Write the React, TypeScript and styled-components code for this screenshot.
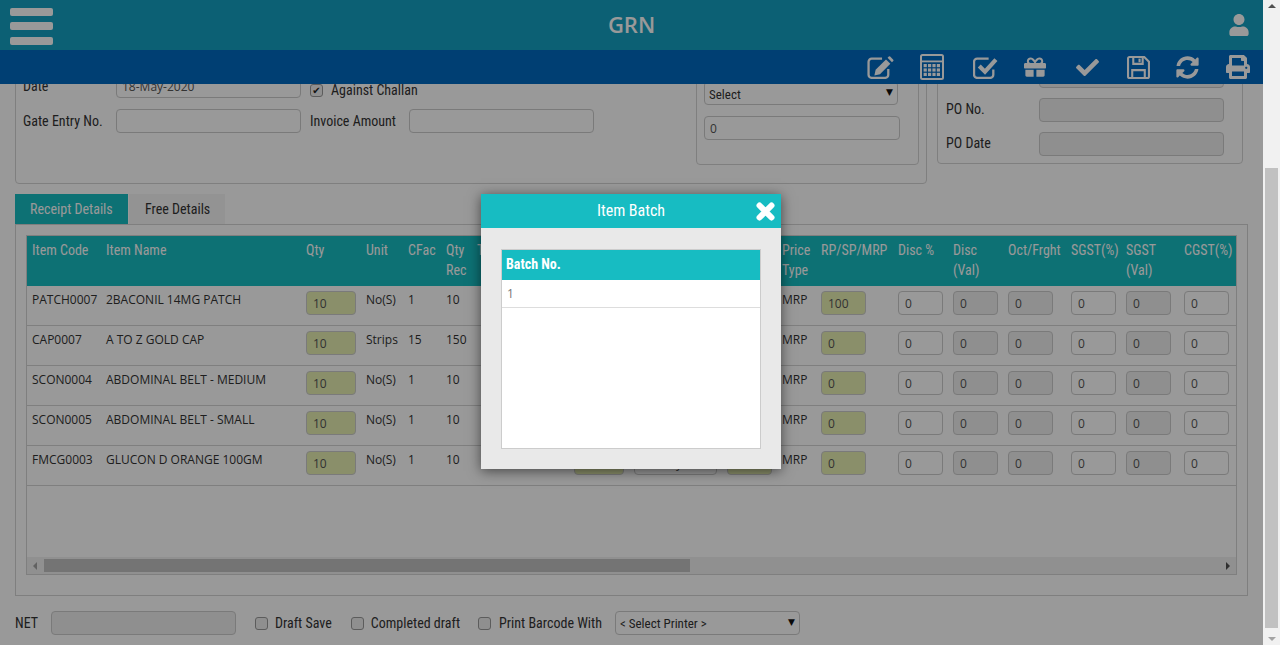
import React from 'react';
import styled, { createGlobalStyle } from 'styled-components';
import { FaCheck, FaGift, FaPrint, FaSyncAlt, FaUser } from 'react-icons/fa';

const narrow = `'Liberation Sans Narrow', 'Roboto Condensed', Roboto, sans-serif`;
const body = `'Open Sans', sans-serif`;

const GlobalStyle = createGlobalStyle`
	html, body { margin: 0; padding: 0; height: 100%; overflow: hidden; background: #fff; }
	* { box-sizing: border-box; }
`;

const Shell = styled.div`
	display: flex;
	width: 1280px;
	height: 645px;
	position: relative;
`;

const Main = styled.div`
	width: 1263px;
	height: 645px;
	display: flex;
	flex-direction: column;
	font-family: ${narrow};
	color: #333;
`;

const Header = styled.header`
	height: 50px;
	flex: none;
	background: #14a0c1;
	display: flex;
	align-items: center;
	padding: 0 13px 0 10px;
`;

const Burger = styled.div`
	width: 43px;
	margin-top: 2px;
	flex: none;
	display: flex;
	flex-direction: column;
	gap: 6.5px;
`;

const BurgerBar = styled.span`
	height: 8px;
	border-radius: 2px;
	background: #fff;
`;

const Title = styled.h1`
	margin: 0 0 2px;
	flex: 1;
	text-align: center;
	font: 600 22px ${body};
	color: #fff;
`;

const UserSlot = styled.div`
	width: 40px;
	flex: none;
	display: flex;
	justify-content: flex-end;
	color: #fff;
	svg {
		display: block;
		width: 22px;
		height: 22px;
	}
`;

const Toolbar = styled.div`
	height: 34px;
	flex: none;
	background: #0069c0;
	display: flex;
	justify-content: flex-end;
	align-items: center;
`;

const ToolButton = styled.span<{ $width: number; $size?: number }>`
	width: ${(p) => p.$width}px;
	display: flex;
	justify-content: center;
	color: #fff;
	svg {
		display: block;
		width: ${(p) => p.$size ?? 24}px;
		height: ${(p) => p.$size ?? 24}px;
	}
`;

const Viewport = styled.div`
	flex: 1;
	overflow: hidden;
	display: flex;
	flex-direction: column;
`;

// the page is scrolled: the top of the form sits under the toolbar
const ScrolledPage = styled.div`
	margin-top: -40px;
	padding: 0 15px;
	display: flex;
	flex-direction: column;
`;

const TopRow = styled.div`
	display: flex;
	align-items: flex-start;
	gap: 10px;
`;

const FormPanel = styled.div`
	width: 912px;
	height: 140px;
	border: 1px solid #d4d4d4;
	border-radius: 4px;
	padding: 0 7px;
	display: flex;
	justify-content: space-between;
`;

const FieldColumn = styled.div`
	padding-top: 29px;
	display: flex;
	flex-direction: column;
	gap: 11px;
`;

const FieldRow = styled.div`
	display: flex;
	align-items: center;
`;

const Label = styled.label<{ $width?: number; $lift?: number; $gap?: number }>`
	width: ${(p) => (p.$width ? `${p.$width}px` : 'auto')};
	margin-left: ${(p) => p.$gap ?? 0}px;
	padding-bottom: ${(p) => p.$lift ?? 0}px;
	flex: none;
	font-size: 14px;
	color: #333;
`;

const Input = styled.input<{ $tone?: 'plain' | 'locked' | 'accent'; $width?: number }>`
	display: block;
	width: ${(p) => p.$width ?? 185}px;
	height: 24px;
	border: 1px solid #ccc;
	border-radius: 4px;
	padding: 0 5px;
	font: 12px ${body};
	color: #555;
	outline: none;
	background: ${(p) => (p.$tone === 'locked' ? '#eee' : p.$tone === 'accent' ? '#e6eeb1' : '#fff')};
`;

const Check = styled.input.attrs({ type: 'checkbox' })`
	appearance: none;
	width: 13px;
	height: 13px;
	margin: 0;
	flex: none;
	display: flex;
	align-items: center;
	justify-content: center;
	background: #eee;
	border: 1px solid #999;
	border-radius: 3px;
	&:checked::after {
		content: '✔';
		font: 10px/11px 'DejaVu Sans', sans-serif;
		color: #222;
	}
`;

const ChallanField = styled.label`
	margin-left: 9px;
	display: flex;
	align-items: center;
	gap: 8px;
	font-size: 14px;
	padding-top: 8px;
`;

const SubPanel = styled.div`
	width: 223px;
	height: 105px;
	margin-top: 15px;
	border: 1px solid #d4d4d4;
	border-radius: 4px;
	padding: 20px 0 0 7px;
	display: flex;
	flex-direction: column;
	gap: 11px;
`;

const SelectBox = styled.div<{ $width: number; $gap?: number }>`
	position: relative;
	width: ${(p) => p.$width}px;
	margin-left: ${(p) => p.$gap ?? 0}px;
	flex: none;
	&::after {
		content: '▼';
		position: absolute;
		right: 5px;
		top: 5px;
		font: 9px/12px 'DejaVu Sans', sans-serif;
		color: #111;
	}
`;

const Select = styled.select<{ $drop?: number }>`
	appearance: none;
	display: block;
	width: 100%;
	height: 24px;
	border: 1px solid #ccc;
	border-radius: 4px;
	background: #fff;
	font: 13px ${narrow};
	color: #333;
	padding: ${(p) => p.$drop ?? 0}px 0 0 4px;
`;

const PoPanel = styled.div`
	width: 306px;
	height: 120px;
	border: 1px solid #d4d4d4;
	border-radius: 4px;
	padding: 19px 0 0 8px;
	display: flex;
	flex-direction: column;
	gap: 10px;
`;

const Tabs = styled.div`
	margin-top: 10px;
	height: 30px;
	display: flex;
	gap: 1px;
`;

const Tab = styled.div<{ $active?: boolean }>`
	padding-left: ${(p) => (p.$active ? 15 : 16)}px;
	width: ${(p) => (p.$active ? 113 : 96)}px;
	line-height: 30px;
	font-size: 14px;
	white-space: nowrap;
	color: ${(p) => (p.$active ? '#fff' : '#333')};
	background: ${(p) => (p.$active ? '#17bcc2' : '#f5f5f5')};
`;

const TabPanel = styled.div`
	width: 1233px;
	height: 372px;
	border: 1px solid #d4d4d4;
	padding: 10px 10px 20px;
`;

const GridFrame = styled.div`
	width: 1211px;
	height: 340px;
	border: 1px solid #d4d4d4;
	display: flex;
	flex-direction: column;
`;

const TableArea = styled.div`
	flex: 1;
	overflow: hidden;
`;

const Table = styled.table`
	table-layout: fixed;
	width: 1210px;
	border-collapse: separate;
	border-spacing: 0;
`;

const Th = styled.th`
	height: 50px;
	padding: 4px 0 6px 5px;
	vertical-align: top;
	text-align: left;
	font-size: 14px;
	font-weight: 400;
	line-height: 20px;
	white-space: pre-line;
	color: #fff;
	background: #17bcc2;
`;

const Td = styled.td`
	height: 40px;
	padding: 4px 0 0 5px;
	vertical-align: top;
	border-bottom: 1px solid #d4d4d4;
	font: 12px/20px ${body};
	color: #333;
	white-space: nowrap;
	overflow: hidden;
`;

const CellInput = styled(Input)`
	margin-top: 1px;
	padding: 0 6px;
`;

const HScroll = styled.div`
	height: 17px;
	flex: none;
	background: #f1f1f1;
	display: flex;
	align-items: center;
	padding: 0 6px;
`;

const HThumb = styled.div`
	width: 646px;
	height: 13px;
	margin-left: 7px;
	margin-right: auto;
	background: #c1c1c1;
`;

const Arrow = styled.span<{ $dir: 'left' | 'right' | 'up' | 'down'; $color: string }>`
	width: 0;
	height: 0;
	flex: none;
	border: 4px solid transparent;
	${(p) => (p.$dir === 'left' ? `border-left: 0; border-right-color: ${p.$color};` : '')}
	${(p) => (p.$dir === 'right' ? `border-right: 0; border-left-color: ${p.$color};` : '')}
	${(p) => (p.$dir === 'up' ? `border-top: 0; border-bottom-color: ${p.$color};` : '')}
	${(p) => (p.$dir === 'down' ? `border-bottom: 0; border-top-color: ${p.$color};` : '')}
`;

const Footer = styled.div`
	margin-top: 15px;
	height: 24px;
	display: flex;
	align-items: center;
`;

const FooterCheck = styled.label<{ $left: number; $gap: number }>`
	margin-left: ${(p) => p.$left}px;
	display: flex;
	align-items: center;
	gap: ${(p) => p.$gap}px;
	font-size: 14px;
	white-space: nowrap;
`;

const PageScroll = styled.div`
	width: 17px;
	height: 645px;
	flex: none;
	background: #f1f1f1;
	display: flex;
	flex-direction: column;
	align-items: center;
	padding: 4px 0;
`;

const PageThumb = styled.div`
	width: 13px;
	height: 460px;
	margin-top: 160px;
	margin-bottom: auto;
	background: #c1c1c1;
`;

const Dim = styled.div`
	position: absolute;
	left: 0;
	top: 0;
	width: 1263px;
	height: 645px;
	background: rgba(0, 0, 0, 0.4);
`;

const Modal = styled.div`
	position: absolute;
	left: 481px;
	top: 194px;
	width: 300px;
	height: 275px;
	background: #e9e9e9;
	box-shadow: 0 2px 12px rgba(0, 0, 0, 0.55);
	font-family: ${narrow};
`;

const ModalHead = styled.div`
	height: 34px;
	padding-bottom: 2px;
	background: #17bcc2;
	color: #fff;
	font-size: 16px;
	display: flex;
	align-items: center;
	justify-content: center;
	position: relative;
`;

const CloseButton = styled.svg`
	position: absolute;
	right: 5px;
	top: 7px;
	width: 21px;
	height: 21px;
	stroke: #fff;
	stroke-width: 6;
	stroke-linecap: round;
`;

const BatchList = styled.div`
	margin: 21px 20px 0;
	height: 200px;
	background: #fff;
	border: 1px solid #ccc;
`;

const BatchHead = styled.div`
	height: 30px;
	padding-left: 4px;
	line-height: 28px;
	background: #17bcc2;
	color: #fff;
	font-size: 14px;
	font-weight: 700;
`;

const BatchRow = styled.div`
	height: 28px;
	padding-left: 5px;
	border-bottom: 1px solid #ddd;
	font: 12px/27px ${body};
	color: #777;
`;

const line = { fill: 'none', stroke: 'currentColor', strokeWidth: 2.2 };

const EditIcon = () => (
	<svg viewBox="0 0 26 22" style={{ width: 27, height: 23 }} fill="currentColor">
		<path {...line} d="M14.5 2.5H4.5a3 3 0 0 0-3 3v12.5a3 3 0 0 0 3 3h13a3 3 0 0 0 3-3v-5.5" />
		<path d="M18.3 3.2l4.2 4.2-10 10-5.4 1.2 1.2-5.4z" />
		<path d="M19.8 1.7l1.2-1.2a1 1 0 0 1 1.3 0l3 3a1 1 0 0 1 0 1.3L24 6z" />
	</svg>
);

const CalculatorIcon = () => (
	<svg viewBox="0 0 24 26" style={{ width: 24, height: 26 }} fill="currentColor">
		<rect x="1" y="1" width="22" height="24" rx="1.5" fill="none" stroke="currentColor" strokeWidth="2" />
		<rect x="1" y="6.5" width="22" height="1.8" />
		{[10, 14.4, 18.8].map((y) =>
			[3.6, 8, 12.4, 16.8].map((x) => <rect key={`${x}-${y}`} x={x} y={y} width="3.2" height="3.2" />),
		)}
	</svg>
);

const CheckSquareIcon = () => (
	<svg viewBox="0 0 24 22" style={{ width: 25, height: 23 }} fill="none" stroke="currentColor">
		<path strokeWidth="2.2" d="M15 2.5H4a3 3 0 0 0-3 3v12.5a3 3 0 0 0 3 3h12.5a3 3 0 0 0 3-3v-5" />
		<path strokeWidth="4" d="M6 9.5l5.5 5.5L22 3.5" />
	</svg>
);

const SaveIcon = () => (
	<svg viewBox="0 0 22 22" style={{ width: 23, height: 23 }} fill="none" stroke="currentColor">
		<path strokeWidth="2" d="M2.5 1H16.5L21 5.5V19.5A1.5 1.5 0 0 1 19.5 21H2.5A1.5 1.5 0 0 1 1 19.5V2.5A1.5 1.5 0 0 1 2.5 1z" />
		<path strokeWidth="2" d="M6 1v6.5h9V1M5 21v-7.5h12V21" />
		<path strokeWidth="2" d="M12 2.5v3.5" />
	</svg>
);

const widths = [74, 200, 60, 42, 38, 31, 97, 60, 93, 55, 39, 77, 55, 55, 63, 55, 58, 58];
const heads = ['Item Code', 'Item Name', 'Qty', 'Unit', 'CFac', 'Qty\nRec', 'Tax', 'Batch', 'Expiry', 'MRP', 'Price\nType', 'RP/SP/MRP', 'Disc %', 'Disc\n(Val)', 'Oct/Frght', 'SGST(%)', 'SGST\n(Val)', 'CGST(%)'];

const rows = [
	{ code: 'PATCH0007', name: '2BACONIL 14MG PATCH', unit: 'No(S)', cfac: '1', rec: '10', rate: '100' },
	{ code: 'CAP0007', name: 'A TO Z GOLD CAP', unit: 'Strips', cfac: '15', rec: '150', rate: '0' },
	{ code: 'SCON0004', name: 'ABDOMINAL BELT - MEDIUM', unit: 'No(S)', cfac: '1', rec: '10', rate: '0' },
	{ code: 'SCON0005', name: 'ABDOMINAL BELT - SMALL', unit: 'No(S)', cfac: '1', rec: '10', rate: '0' },
	{ code: 'FMCG0003', name: 'GLUCON D ORANGE 100GM', unit: 'No(S)', cfac: '1', rec: '10', rate: '0' },
];

export default function App() {
	return (
		<Shell>
			<GlobalStyle />
			<Main>
				<Header>
					<Burger>
						<BurgerBar />
						<BurgerBar />
						<BurgerBar />
					</Burger>
					<Title>GRN</Title>
					<UserSlot><FaUser /></UserSlot>
				</Header>
				<Toolbar>
					<ToolButton $width={46}><EditIcon /></ToolButton>
					<ToolButton $width={58}><CalculatorIcon /></ToolButton>
					<ToolButton $width={48}><CheckSquareIcon /></ToolButton>
					<ToolButton $width={51} $size={22}><FaGift /></ToolButton>
					<ToolButton $width={54} $size={23}><FaCheck /></ToolButton>
					<ToolButton $width={48}><SaveIcon /></ToolButton>
					<ToolButton $width={50} $size={23}><FaSyncAlt /></ToolButton>
					<ToolButton $width={51}><FaPrint /></ToolButton>
				</Toolbar>
				<Viewport>
					<ScrolledPage>
						<TopRow>
							<FormPanel>
								<FieldColumn>
									<FieldRow>
										<Label $width={93}>Date</Label>
										<Input defaultValue="18-May-2020" />
										<ChallanField>
											<Check defaultChecked />
											Against Challan
										</ChallanField>
									</FieldRow>
									<FieldRow>
										<Label $width={93}>Gate Entry No.</Label>
										<Input />
										<Label $width={99} $gap={9}>Invoice Amount</Label>
										<Input />
									</FieldRow>
								</FieldColumn>
								<SubPanel>
									<SelectBox $width={194}>
										<Select $drop={2}><option>Select</option></Select>
									</SelectBox>
									<Input $width={196} defaultValue="0" />
								</SubPanel>
							</FormPanel>
							<PoPanel>
								<FieldRow>
									<Label $width={93} />
									<Input $tone="locked" />
								</FieldRow>
								<FieldRow>
									<Label $width={93} $lift={3}>PO No.</Label>
									<Input $tone="locked" />
								</FieldRow>
								<FieldRow>
									<Label $width={93} $lift={3}>PO Date</Label>
									<Input $tone="locked" />
								</FieldRow>
							</PoPanel>
						</TopRow>
						<Tabs>
							<Tab $active>Receipt Details</Tab>
							<Tab>Free Details</Tab>
						</Tabs>
						<TabPanel>
							<GridFrame>
								<TableArea>
									<Table>
										<colgroup>
											{widths.map((w, i) => <col key={i} style={{ width: w }} />)}
										</colgroup>
										<thead>
											<tr>{heads.map((h) => <Th key={h}>{h}</Th>)}</tr>
										</thead>
										<tbody>
											{rows.map((r) => (
												<tr key={r.code}>
													<Td>{r.code}</Td>
													<Td>{r.name}</Td>
													<Td><CellInput $tone="accent" $width={50} defaultValue="10" /></Td>
													<Td>{r.unit}</Td>
													<Td>{r.cfac}</Td>
													<Td>{r.rec}</Td>
													<Td />
													<Td><CellInput $tone="accent" $width={50} defaultValue="1" /></Td>
													<Td><CellInput $width={83} defaultValue="18-May-2021" /></Td>
													<Td><CellInput $tone="accent" $width={45} defaultValue="100" /></Td>
													<Td>MRP</Td>
													<Td><CellInput $tone="accent" $width={45} defaultValue={r.rate} /></Td>
													<Td><CellInput $width={45} defaultValue="0" /></Td>
													<Td><CellInput $tone="locked" $width={45} defaultValue="0" /></Td>
													<Td><CellInput $tone="locked" $width={45} defaultValue="0" /></Td>
													<Td><CellInput $width={45} defaultValue="0" /></Td>
													<Td><CellInput $tone="locked" $width={45} defaultValue="0" /></Td>
													<Td><CellInput $width={45} defaultValue="0" /></Td>
												</tr>
											))}
										</tbody>
									</Table>
								</TableArea>
								<HScroll>
									<Arrow $dir="left" $color="#a3a3a3" />
									<HThumb />
									<Arrow $dir="right" $color="#505050" />
								</HScroll>
							</GridFrame>
						</TabPanel>
						<Footer>
							<Label $width={36}>NET</Label>
							<Input $tone="locked" />
							<FooterCheck $left={19} $gap={7}><Check />Draft Save</FooterCheck>
							<FooterCheck $left={19} $gap={7}><Check />Completed draft</FooterCheck>
							<FooterCheck $left={18} $gap={8}><Check />Print Barcode With</FooterCheck>
							<SelectBox $width={185} $gap={13}>
								<Select><option>&lt; Select Printer &gt;</option></Select>
							</SelectBox>
						</Footer>
					</ScrolledPage>
				</Viewport>
			</Main>
			<PageScroll>
				<Arrow $dir="up" $color="#505050" />
				<PageThumb />
				<Arrow $dir="down" $color="#a3a3a3" />
			</PageScroll>
			<Dim>
				<Modal>
					<ModalHead>
						Item Batch
						<CloseButton viewBox="0 0 21 21">
							<path d="M4.5 4.5l12 12M16.5 4.5l-12 12" />
						</CloseButton>
					</ModalHead>
					<BatchList>
						<BatchHead>Batch No.</BatchHead>
						<BatchRow>1</BatchRow>
					</BatchList>
				</Modal>
			</Dim>
		</Shell>
	);
}
